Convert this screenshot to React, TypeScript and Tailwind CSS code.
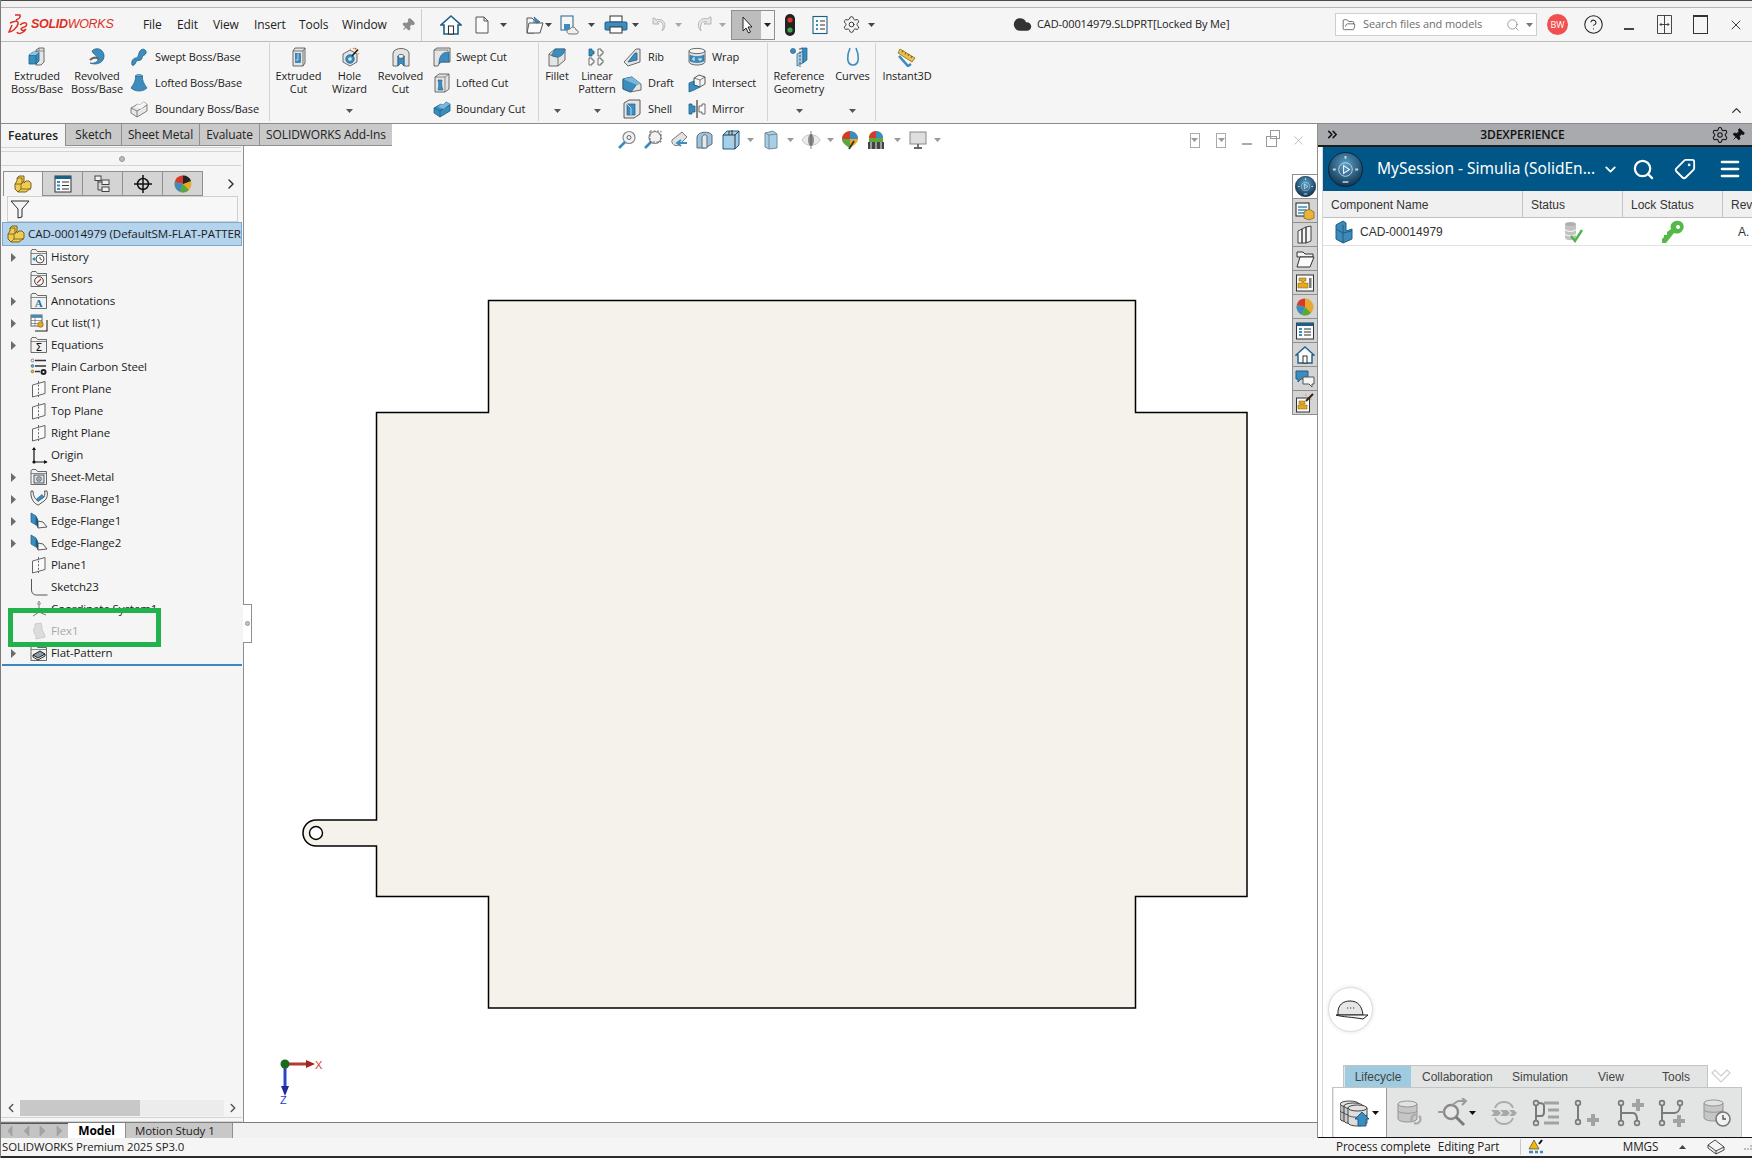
import React from "react";
import { Search, Tag, Menu, ChevronDown, ChevronRight, ChevronLeft, ChevronUp, Settings, Pin, Cloud, X, HelpCircle, ChevronsRight, FolderOpen } from "lucide-react";

const BL = "#3c8dbd", BD = "#1c5f88", OL = "#4a4a4a", LG = "#e4e4e4";

type P = { s?: number; c?: React.ReactNode; w?: number; h?: number; vb?: string };
const V = ({ s = 20, c, w, h, vb = "0 0 20 20" }: P) => (
  <svg width={w ?? s} height={h ?? s} viewBox={vb} className="shrink-0 block">{c}</svg>
);

const Caret = ({ up = false, c = "#555" }: { up?: boolean; c?: string }) => (
  <svg width="7" height="4" viewBox="0 0 7 4" className="shrink-0 block">
    <path d={up ? "M0 4 L3.5 0 L7 4Z" : "M0 0 H7 L3.5 4Z"} fill={c} />
  </svg>
);

/* ribbon icons */
const ExtrudedBoss = () => <V c={<>
  <path d="M9 3 L12 1 H17 V15 L14 18 H9Z" fill={LG} stroke={OL} strokeWidth=".8" />
  <path d="M12 1 V4 H9 M12 4 H17" fill="none" stroke={OL} strokeWidth=".6" />
  <path d="M2 8 L6 5 H12 V14 L9 17 H2Z" fill={BL} stroke={BD} strokeWidth=".8" />
  <path d="M2 8 H9 V17 M9 8 L12 5" fill="none" stroke={BD} strokeWidth=".8" />
  <path d="M2 8 L6 5 H12 L9 8Z" fill="#8cc4e4" />
</>} />;
const RevolvedBoss = () => <V c={<>
  <path d="M5 4 C8 0 16 1 17 8 C18 15 10 19 3 16 C8 17 12 14 11 11 C9 8 6 7 5 4Z" fill={BL} stroke={BD} strokeWidth=".7" />
  <path d="M3 13 C6 10 9 10 12 12" fill="none" stroke="#666" strokeWidth="2" />
</>} />;
const Swept = () => <V c={<path d="M3 18 C2 13 5 11 7 11 C10 11 9 5 12 3 C14 1 18 3 17 6 C16 9 13 8 13 11 C12 15 8 12 7 15 C6 18 4 19 3 18Z" fill={BL} stroke={BD} strokeWidth=".8" />} />;
const Lofted = () => <V c={<>
  <ellipse cx="10" cy="3" rx="3.5" ry="1.5" fill="#c4dcec" stroke={BD} strokeWidth=".7" />
  <path d="M6.5 3 C7 8 4 12 2 15 C6 19 14 19 18 15 C16 12 13 8 13.5 3Z" fill={BL} stroke={BD} strokeWidth=".7" />
</>} />;
const Boundary = ({ blue = false }: { blue?: boolean }) => <V c={<>
  <path d="M2 9 L9 5 C11 7 12 5 14 3 L18 5 V12 L8 18 L2 14Z" fill={blue ? BL : "#e8e8e8"} stroke={blue ? BD : "#666"} strokeWidth=".8" />
  <path d="M2 9 L8 12 L18 6 M8 12 V18" fill="none" stroke={blue ? BD : "#666"} strokeWidth=".8" />
  <path d="M9 5 C11 7 12 5 14 3 L18 5 C15 7 13 9 12 10 L6 8Z" fill={blue ? "#7ab7da" : "#f6f6f6"} />
</>} />;
const ExtrudedCut = () => <V c={<>
  <path d="M4 4 L6 1 H16 V16 L14 19 H4Z" fill={LG} stroke={OL} strokeWidth=".8" />
  <path d="M4 4 H14 V19 M14 4 L16 1" fill="none" stroke={OL} strokeWidth=".7" />
  <rect x="6.5" y="6.5" width="5" height="9" fill={BL} stroke={BD} strokeWidth=".6" />
  <path d="M6.5 13 H9 V6.5" fill="none" stroke="#d5eaf7" strokeWidth=".8" />
</>} />;
const Hole = () => <V c={<>
  <path d="M3 7 L10 3 L17 7 V15 L10 19 L3 15Z" fill={LG} stroke={OL} strokeWidth=".8" />
  <circle cx="10" cy="12" r="4.2" fill={BL} stroke={BD} strokeWidth=".8" />
  <circle cx="10" cy="12" r="1.8" fill="#d6ebf7" />
  <path d="M12 9 L18 2.5" stroke="#222" strokeWidth="1.8" />
  <path d="M13 1 l1 1 M18 6 l1 1 M10 2 h1" stroke="#e0a020" strokeWidth="1.2" />
  <circle cx="15.5" cy="1.6" r=".9" fill="#d03a2a" />
</>} />;
const RevolvedCut = () => <V c={<>
  <path d="M2 6 C3 0 17 0 18 6 V19 H13 V9 C13 7 7 7 7 9 V19 H2Z" fill={LG} stroke={OL} strokeWidth=".8" />
  <path d="M7 9 C8 12 12 12 13 9 V19 L10 16 L7 19Z" fill={BL} stroke={BD} strokeWidth=".7" />
</>} />;
const SweptCut = () => <V c={<>
  <path d="M2 3 L5 1 H18 V15 H8 L6 19 H2Z" fill={LG} stroke={OL} strokeWidth=".8" />
  <path d="M2 3 H16 V4" fill="none" stroke={OL} strokeWidth=".6" />
  <path d="M7 17 C7 9 10 5 17 5 V15 H11 C10 15 9 15 7 17Z" fill={BL} stroke={BD} strokeWidth=".7" />
</>} />;
const LoftedCut = () => <V c={<>
  <path d="M3 4 L7 1 H17 V16 L13 19 H3Z" fill={LG} stroke={OL} strokeWidth=".8" />
  <path d="M3 4 H13 V19 M13 4 L17 1" fill="none" stroke={OL} strokeWidth=".6" />
  <path d="M6 7 H10 C9 11 10 14 11 17 H6 C7 13 7 10 6 7Z" fill={BL} stroke={BD} strokeWidth=".6" />
</>} />;
const Fillet = () => <V c={<>
  <path d="M2 7 L8 2 H18 V13 L11 19 H2Z" fill={LG} stroke={OL} strokeWidth=".8" />
  <path d="M11 19 V10 M2 7 C4 9 8 10 11 10" fill="none" stroke={OL} strokeWidth=".7" />
  <path d="M8 2 H18 C18 6 14 10 11 10 C9 10 6 9 4.5 8 Z" fill={BL} stroke={BD} strokeWidth=".6" />
</>} />;
const Pattern = () => <V c={<>
  {[[2, 2, 1], [11, 2, 0], [2, 11, 0], [11, 11, 0]].map(([x, y, b], i) => (
    <path key={i} d={`M${x} ${y} h3 v2 h2 v3 h-2 v2 h-3Z`} fill={b ? BL : "#f8f8f8"} stroke={b ? BD : OL} strokeWidth=".8" />
  ))}
</>} />;
const Rib = () => <V c={<>
  <path d="M2 15 L14 2 L18 2 V15 L6 19Z" fill={LG} stroke={OL} strokeWidth=".8" />
  <path d="M6 15 L13 6 L15 6 V13Z" fill={BL} stroke={BD} strokeWidth=".8" />
</>} />;
const Draft = () => <V c={<>
  <path d="M1 6 L10 4 L19 11 V17 L8 19 L1 16Z" fill={LG} stroke={OL} strokeWidth=".8" />
  <path d="M1 6 L10 4 L15 11 L9 19 L1 16Z" fill={BL} stroke={BD} strokeWidth=".8" />
  <path d="M1 6 L10 4 L19 11 L15 12Z" fill="#7ab7da" />
</>} />;
const Shell = () => <V c={<>
  <path d="M2 4 L7 1 H18 V15 L12 19 H2Z" fill={LG} stroke={OL} strokeWidth=".9" />
  <path d="M5 5 H13 V16 H5Z" fill={BL} stroke={BD} strokeWidth=".7" />
  <path d="M5 5 L9 9 V16" fill="none" stroke="#d5eaf7" strokeWidth=".8" />
</>} />;
const Wrap = () => <V c={<>
  <path d="M2 4 V15 C3 19 17 19 18 15 V4" fill={LG} stroke={OL} strokeWidth=".8" />
  <ellipse cx="10" cy="4" rx="8" ry="2.6" fill="#f6f6f6" stroke={OL} strokeWidth=".8" />
  <path d="M3 8 C7 10 13 10 17 8 V14 C13 16 7 16 3 14Z" fill={BL} stroke={BD} strokeWidth=".5" />
  <path d="M8 11 h-2 v2 h2 M12 11 v2 h2 v-2" stroke="#fff" strokeWidth=".9" fill="none" />
</>} />;
const Intersect = () => <V c={<>
  <path d="M7 5 L12 2 L18 4 V11 L13 14 L7 12Z" fill="#f4f4f4" stroke={OL} strokeWidth=".9" />
  <path d="M7 5 L13 7 V14 M13 7 L18 4" fill="none" stroke={OL} strokeWidth=".7" />
  <path d="M2 10 L7 8 V12 L13 14 L7 17 L2 19Z" fill={BL} stroke={BD} strokeWidth=".8" />
</>} />;
const Mirror = () => <V c={<>
  <path d="M2 5 H5 V7 H8 V13 H5 V15 H2Z" fill={BL} stroke={BD} strokeWidth=".8" />
  <path d="M18 5 H15 V7 H12 V13 H15 V15 H18Z" fill="#fbfbfb" stroke={OL} strokeWidth=".8" />
  <path d="M10 1 V19" stroke="#111" strokeWidth="1" />
</>} />;
const RefGeo = () => <V c={<>
  <circle cx="4" cy="4" r="2.5" fill={BL} stroke={BD} strokeWidth=".7" />
  <path d="M8 7 L14 4 V16 L8 19Z" fill="#a6cde5" stroke={BD} strokeWidth=".7" />
  <path d="M12 1 L18 1 V13 L14 16 V4Z" fill={BL} stroke={BD} strokeWidth=".7" />
  <path d="M11 1 V20" stroke="#222" strokeWidth=".8" strokeDasharray="2 1.5" />
</>} />;
const Curves = () => <V c={<path d="M7 1 C4 8 3 18 10 18 C17 18 16 8 13 1" fill="none" stroke={BL} strokeWidth="1.6" />} />;
const Instant = () => <V c={<>
  <path d="M3 2 L18 11 L15 15 L1 6Z" fill="#e8c04a" stroke="#7a5c10" strokeWidth=".7" />
  <path d="M6 3.5 l-1 2 M9 5.5 l-1 2 M12 7 l-1 2 M15 9 l-1 2" stroke="#5a4408" strokeWidth=".8" />
  <path d="M2 9 L11 19 L14 17" fill="none" stroke={BL} strokeWidth="2.6" />
</>} />;

/* tree icons */
const Folder = ({ c }: { c?: React.ReactNode }) => <V s={18} vb="0 0 18 18" c={<>
  <path d="M1 3 L2 1.5 H6 L7.5 3.5 H16.5 V16.5 H1Z" fill="#f2f2f2" stroke="#5a5a5a" strokeWidth=".9" />
  <path d="M1 5.5 H16.5" stroke="#5a5a5a" strokeWidth=".7" />
  {c}
</>} />;
const PlaneI = () => <V s={18} vb="0 0 18 18" c={<>
  <path d="M2.5 5 L15 1.5 V13.5 L2.5 17Z" fill="#fafafa" stroke="#555" strokeWidth=".9" />
  <path d="M8.5 1 V17" stroke="#555" strokeWidth=".9" strokeDasharray="2 1.6" />
</>} />;

const treeIcons: Record<string, React.ReactNode> = {
  history: <Folder c={<><circle cx="10" cy="11" r="4" fill="#fff" stroke="#222" strokeWidth=".8" /><path d="M10 9 V11 L12 12" stroke="#222" strokeWidth=".8" fill="none" /><path d="M3 11 H6.5 M5 9.5 L3 11 L5 12.5" stroke={BL} strokeWidth="1.2" fill="none" /></>} />,
  sensors: <Folder c={<><circle cx="9" cy="11" r="4.3" fill="#fff" stroke="#222" strokeWidth=".9" /><path d="M7 13 L11 9" stroke="#d0342c" strokeWidth="1.2" /></>} />,
  ann: <Folder c={<text x="8.7" y="15" textAnchor="middle" fontFamily="Liberation Serif" fontWeight="700" fontSize="11" fill="#2b6ea3">A</text>} />,
  cut: <V s={18} vb="0 0 18 18" c={<>
    <rect x="1" y="1" width="11" height="11" fill="#fff" stroke="#555" strokeWidth=".9" />
    <path d="M1 3.5 H12 M1 6.5 H12 M1 9.5 H12 M5 3.5 V12" stroke="#555" strokeWidth=".6" />
    <rect x="1" y="1" width="11" height="2.5" fill={BL} />
    <path d="M5 17 H17 V6" fill="none" stroke="#222" strokeWidth="1.1" />
    <circle cx="10.5" cy="10.5" r="2.8" fill="#e6a61f" stroke="#7a5c10" strokeWidth=".6" />
  </>} />,
  eq: <Folder c={<text x="8.7" y="15" textAnchor="middle" fontFamily="DejaVu Sans" fontSize="10.5" fill="#111">Σ</text>} />,
  mat: <V s={18} vb="0 0 18 18" c={<>
    <path d="M5 2.5 H16 M5 8 H16 M5 13.5 H10" stroke="#333" strokeWidth="1.3" />
    <circle cx="2.5" cy="2.5" r="1.4" fill="#fff" stroke="#555" strokeWidth=".7" />
    <circle cx="2.5" cy="8" r="1.4" fill="#6aa9d2" stroke={BD} strokeWidth=".6" />
    <circle cx="2.5" cy="13.5" r="1.4" fill="#e9b43a" stroke="#7a5c10" strokeWidth=".6" />
    <circle cx="13.5" cy="14" r="3" fill="#222" /><circle cx="13.5" cy="14" r="1" fill="#f5f5f5" />
  </>} />,
  plane: <PlaneI />,
  origin: <V s={18} vb="0 0 18 18" c={<>
    <path d="M4 16 V2 M4 16 H17" stroke="#111" strokeWidth="1.2" />
    <path d="M2 4 L4 1 L6 4Z M14 14 L17.5 16 L14 18Z" fill="#111" />
    <circle cx="4" cy="16" r="1.6" fill="#111" />
  </>} />,
  sm: <Folder c={<><rect x="4" y="7" width="10" height="8" fill="#cfe2f0" stroke="#222" strokeWidth=".7" /><circle cx="9" cy="11" r="2.2" fill="#fff" stroke="#222" strokeWidth=".8" /><circle cx="9" cy="11" r=".8" fill="#222" /></>} />,
  base: <V s={18} vb="0 0 18 18" c={<>
    <path d="M1 1 L3 1 C3 6 5 9 8 11 L14 7 C15 5 15 3 14.5 1 H17 C18 5 17 9 14 11 L8.5 15 C4 14 0 8 1 1Z" fill="#f4f4f4" stroke="#444" strokeWidth=".9" />
    <path d="M6.5 9 L12 4.5 L14 7 L8 11.5Z" fill={BL} stroke={BD} strokeWidth=".6" />
  </>} />,
  edge: <V s={18} vb="0 0 18 18" c={<>
    <path d="M1 1 L6 4 V13 L1 10Z" fill={BL} stroke={BD} strokeWidth=".7" />
    <path d="M6 4 L8 7 V16 L6 13Z" fill={BD} />
    <path d="M8 16 L17 15 L13 10 L8 9Z" fill="#f6f6f6" stroke="#333" strokeWidth=".8" />
  </>} />,
  sketch: <V s={18} vb="0 0 18 18" c={<path d="M1.5 1 V12 C1.5 15 3.5 17 6.5 17 H17.5" fill="none" stroke="#444" strokeWidth=".9" />} />,
  coord: <V s={18} vb="0 0 18 18" c={<>
    <path d="M9 12 V2 M9 12 L3 16 M9 12 L16 15" stroke="#555" strokeWidth=".8" />
    <path d="M7.5 4 L9 1 L10.5 4Z" fill="#fff" stroke="#555" strokeWidth=".6" />
  </>} />,
  flex: <V s={18} vb="0 0 18 18" c={<path d="M5 2 L11 1 L12 5 C11 8 15 11 15 15 L6 17 C7 13 3 11 3.5 7 C5 6 5.5 4 5 2Z" fill="#dcdcdc" stroke="#c4c4c4" strokeWidth=".8" />} />,
  flat: <Folder c={<><path d="M3 11 L10 7 L15 10 L8 14Z" fill="#8a9aa6" stroke="#111" strokeWidth=".9" /><path d="M3 11 V13 L8 16 L15 12 V10" fill="none" stroke="#111" strokeWidth=".9" /></>} />,
};

const Part = ({ s = 18 }: { s?: number }) => <V s={s} vb="0 0 18 18" c={<>
  <path d="M1 9 L3 6 V3 L5 1 H10 V8 L12 6 H15 L17 8 V13 L12 17 H4 L1 14Z" fill="#eecb52" stroke="#6d5510" strokeWidth=".9" />
  <path d="M1 9 H7 L10 6 M7 9 V14 L4 17 M7 14 H17 M3 3 H8 V9" fill="none" stroke="#6d5510" strokeWidth=".8" />
</>} />;

const Compass = ({ s, id }: { s: number; id: string }) => (
  <svg width={s} height={s} viewBox="0 0 36 36" className="shrink-0 block">
    <defs><radialGradient id={id} cx="50%" cy="35%" r="70%"><stop offset="0" stopColor="#5a9fc6" /><stop offset="1" stopColor="#0b2c47" /></radialGradient></defs>
    <circle cx="18" cy="18" r="17.5" fill={`url(#${id})`} stroke="#0a2438" />
    <circle cx="18" cy="18" r="7" fill="none" stroke="#d9ecf7" strokeWidth=".8" />
    <path d="M16 14 L22 18 L16 22Z" fill="none" stroke="#e8f4fb" strokeWidth="1.2" />
    <path d="M5 17 h3 v2 h-3Z M28 17 h3 v2 h-3Z M15 30 h6 v1.5 h-6Z M17 4 h2 v3 h-2Z" fill="#bcd9ea" />
  </svg>
);

const Big = ({ icon, l1, l2, w, dd = false }: { icon: React.ReactNode; l1: string; l2?: string; w: string; dd?: boolean }) => (
  <div className={`flex flex-col items-center h-[78px] pt-[4px] shrink-0 ${w}`}>
    <div className="h-[20px]">{icon}</div>
    <div className="mt-[2px] text-center leading-[13px] whitespace-nowrap">{l1}{l2 && <><br />{l2}</>}</div>
    {dd && <div className="mt-auto mb-[8px]"><Caret /></div>}
  </div>
);
const SmallCol = ({ w, items, gap }: { w: string; gap: string; items: [React.ReactNode, string][] }) => (
  <div className={`flex flex-col shrink-0 mt-[1px] ${w}`}>
    {items.map(([ic, t]) => (
      <div key={t} className={`flex items-center h-[26px] whitespace-nowrap ${gap}`}>{ic}<span>{t}</span></div>
    ))}
  </div>
);
const Sep = () => <div className="w-px h-[78px] bg-[#d4d4d4] shrink-0" />;

const tree: [string, string, boolean, string?][] = [
  ["History", "history", true], ["Sensors", "sensors", false], ["Annotations", "ann", true], ["Cut list(1)", "cut", true],
  ["Equations", "eq", true], ["Plain Carbon Steel", "mat", false], ["Front Plane", "plane", false], ["Top Plane", "plane", false],
  ["Right Plane", "plane", false], ["Origin", "origin", false], ["Sheet-Metal", "sm", true], ["Base-Flange1", "base", true],
  ["Edge-Flange1", "edge", true], ["Edge-Flange2", "edge", true], ["Plane1", "plane", false], ["Sketch23", "sketch", false],
  ["Coordinate System1", "coord", false], ["Flex1", "flex", false, "text-[#a8a8a8]"], ["Flat-Pattern", "flat", true],
];

const Gy = ({ c, w = 30, h = 30 }: { c: React.ReactNode; w?: number; h?: number }) => (
  <svg width={w} height={h} viewBox="0 0 30 30" className="shrink-0 block">{c}</svg>
);
const Db = ({ x = 3, y = 3, f = "#c6c6c6", k = "#8c8c8c" }: { x?: number; y?: number; f?: string; k?: string }) => (
  <g transform={`translate(${x} ${y})`}>
    <path d="M0 3 V18 C1 22 18 22 19 18 V3Z" fill={f} stroke={k} strokeWidth=".9" />
    <ellipse cx="9.5" cy="3" rx="9.5" ry="3" fill="#e2e2e2" stroke={k} strokeWidth=".9" />
    <path d="M0 10 C1 13 18 13 19 10" fill="none" stroke={k} strokeWidth=".8" />
  </g>
);
const Node = ({ x, y }: { x: number; y: number }) => <circle cx={x} cy={y} r="2.4" fill="#dedede" stroke="#7a7a7a" strokeWidth="1.6" />;
const Plus = ({ x, y }: { x: number; y: number }) => <path transform={`translate(${x} ${y})`} d="M4 0 h4 v4 h4 v4 h-4 v4 h-4 v-4 h-4 v-4 h4Z" fill="#a2a2a2" />;

const App = () => (
  <div className="w-[1752px] h-[1158px] overflow-hidden flex flex-col bg-[#f5f5f5] border-l border-[#7c7c7c] text-[#1c1c1c] text-[11px] font-['Open_Sans','Noto_Sans',sans-serif] tracking-[-0.1px]">
    {/* window strip */}
    <div className="h-[1px] bg-[#4a4a4a] shrink-0" />
    <div className="h-[7px] bg-[#f1f1f1] border-b border-[#b4b4b4] shrink-0" />

    {/* title bar */}
    <div className="h-[34px] border-b border-[#bcbcbc] flex items-center shrink-0 relative">
      <div className="flex items-center w-[142px] pl-[6px] gap-[2px]">
        <V w={22} h={22} vb="0 0 22 22" c={<path d="M8 1 L13 1 C14 3 12 5 9 6 M3 9 C7 7 12 6 11 10 C10 14 5 18 2 18 L5 11 M13 11 C18 7 21 9 19 12 C17 14 14 13 14 15 C15 18 18 16 19 15 C17 19 11 21 10 18" fill="none" stroke="#dc2f25" strokeWidth="1.5" />} />
        <span className="italic text-[#dc2f25] text-[12.5px] font-['Liberation_Sans',sans-serif] tracking-[-0.3px]"><b>SOLID</b>WORKS</span>
      </div>
      <div className="flex items-center text-[12px] text-[#222] w-[278px]">
        <span className="w-[34px]">File</span><span className="w-[36px]">Edit</span><span className="w-[41px]">View</span>
        <span className="w-[45px]">Insert</span><span className="w-[43px]">Tools</span><span className="w-[59px]">Window</span>
        <Pin size={14} className="text-[#8c8c8c] rotate-45" fill="#8c8c8c" />
      </div>
      <div className="w-px h-[32px] bg-[#cfcfcf]" />
      <div className="flex items-center ml-[18px]">
        <V s={22} vb="0 0 22 22" c={<>
          <path d="M11 2 L21 11 H18 V20 H4 V11 H1Z" fill="#fff" stroke={BD} strokeWidth="1.6" />
          <rect x="8.5" y="12" width="5" height="8" fill="#fff" stroke="#333" strokeWidth="1.1" />
        </>} />
        <div className="ml-[11px]"><V s={18} vb="0 0 18 18" c={<path d="M3 1 H11 L15 5 V17 H3Z M11 1 V5 H15" fill="#fafafa" stroke="#555" strokeWidth="1" />} /></div>
        <div className="ml-[9px]"><Caret c="#444" /></div>
        <div className="ml-[18px]"><V s={20} c={<>
          <path d="M2 3 H7 L9 5 V18 H2Z" fill="#f6f6f6" stroke="#555" />
          <path d="M4 8 H18 L15 18 H2Z" fill="#fafafa" stroke="#555" />
          <path d="M9 2 L15 7 L11 8 Z" fill={BL} stroke={BD} strokeWidth=".7" />
        </>} /></div>
        <Caret c="#444" />
        <div className="ml-[7px]"><V s={20} c={<>
          <rect x="2" y="1" width="12" height="14" fill="#f6f6f6" stroke="#3b6d90" strokeWidth="1.1" />
          <rect x="5" y="9" width="6" height="6" fill={BL} />
          <path d="M11 19 C7 19 7 14 11 14 C12 11 17 12 17 15 C20 15 20 19 17 19Z" fill="#eee" stroke="#666" strokeWidth=".9" />
        </>} /></div>
        <div className="ml-[9px]"><Caret c="#444" /></div>
        <div className="ml-[9px]"><V w={24} h={20} vb="0 0 24 20" c={<>
          <rect x="6" y="1" width="12" height="6" fill="#fff" stroke="#333" />
          <rect x="1" y="7" width="22" height="8" rx="1" fill={BL} stroke={BD} />
          <rect x="6" y="12" width="12" height="6" fill="#fff" stroke="#333" />
        </>} /></div>
        <div className="ml-[4px]"><Caret c="#444" /></div>
        <div className="ml-[11px]"><V s={18} vb="0 0 18 18" c={<path d="M3 2 V8 H9 L7 6 C11 4 15 8 12 15 C18 10 14 1 6 4 L4.5 2Z" fill="#e6e6e6" stroke="#b0b0b0" strokeWidth=".9" />} /></div>
        <div className="ml-[7px]"><Caret c="#a8a8a8" /></div>
        <div className="ml-[13px]"><V s={20} c={<path d="M16 2 V9 H9 L11.5 7 C8 5 4 9 6 16 C0 10 5 1 13 4 L14.5 2Z" fill="#e6e6e6" stroke="#b0b0b0" strokeWidth=".9" />} /></div>
        <div className="ml-[4px]"><Caret c="#a8a8a8" /></div>
        <div className="ml-[5px] flex items-center h-[30px] border border-[#8f8f8f]">
          <div className="w-[29px] h-full bg-[#bdbdbd] flex items-center justify-center">
            <V s={20} c={<path d="M6 2 V16 L9 13 L11.5 18 L13.5 17 L11 12 H15Z" fill="#fff" stroke="#222" strokeWidth="1" />} />
          </div>
          <div className="w-[13px] flex justify-center"><Caret c="#222" /></div>
        </div>
        <div className="ml-[9px]"><V w={12} h={24} vb="0 0 12 24" c={<>
          <rect x="1" y="1" width="10" height="22" rx="5" fill="#222" />
          <circle cx="6" cy="7" r="2.6" fill="#d8372d" /><circle cx="6" cy="17" r="2.6" fill="#3da84a" />
        </>} /></div>
        <div className="ml-[14px]"><V s={20} c={<>
          <rect x="3" y="1.5" width="14" height="17" fill="#fafafa" stroke={BD} strokeWidth="1.1" />
          <path d="M6 6 H8 M6 10 H8 M6 14 H8" stroke={BL} strokeWidth="2" />
          <path d="M10 6 H15 M10 10 H15 M10 14 H15" stroke="#333" strokeWidth="1.2" />
        </>} /></div>
        <div className="ml-[12px]"><Settings size={19} strokeWidth={1.2} className="text-[#333]" /></div>
        <div className="ml-[7px]"><Caret c="#444" /></div>
      </div>
      <div className="ml-[138px] flex items-center gap-[5px] text-[11px] text-[#222] whitespace-nowrap">
        <Cloud size={19} fill="#333" className="text-[#333]" />
        <span>CAD-00014979.SLDPRT[Locked By Me]</span>
      </div>
      <div className="ml-auto flex items-center">
        <div className="w-[202px] h-[23px] bg-white border border-[#cfcfcf] flex items-center pl-[6px] text-[#6e6e6e] text-[11px] whitespace-nowrap">
          <FolderOpen size={14} strokeWidth={1.3} className="text-[#444]" />
          <span className="ml-[7px]">Search files and models</span>
          <Search size={14} strokeWidth={1.2} className="ml-auto text-[#777]" />
          <div className="ml-[6px] mr-[3px]"><Caret c="#777" /></div>
        </div>
        <div className="ml-[10px] w-[21px] h-[21px] rounded-full bg-[#f05050] text-white text-[9px] flex items-center justify-center">BW</div>
        <HelpCircle size={21} strokeWidth={1.2} className="ml-[15px] text-[#222]" />
        <div className="ml-[20px] w-[10px] h-[2px] bg-[#444] mt-[9px]" />
        <div className="ml-[23px]"><V w={15} h={19} vb="0 0 15 19" c={<path d="M.5 .5 H14.5 V18.5 H.5Z M7.5 .5 V18.5 M3 9.5 H12 M4.5 8 L3 9.5 L4.5 11 M10.5 8 L12 9.5 L10.5 11" fill="none" stroke="#333" strokeWidth=".9" />} /></div>
        <div className="ml-[21px] w-[15px] h-[19px] border border-[#333] border-t-[2px]" />
        <X size={16} strokeWidth={1.3} className="ml-[20px] mr-[8px] text-[#222]" />
      </div>
    </div>

    {/* ribbon */}
    <div className="h-[82px] border-b border-[#8a8a8a] flex items-start pt-[1px] shrink-0 relative">
      <div className="w-[6px]" />
      <Big icon={<ExtrudedBoss />} l1="Extruded" l2="Boss/Base" w="w-[60px]" />
      <Big icon={<RevolvedBoss />} l1="Revolved" l2="Boss/Base" w="w-[60px]" />
      <SmallCol w="w-[140px] ml-[2px]" gap="gap-[6px]" items={[[<Swept />, "Swept Boss/Base"], [<Lofted />, "Lofted Boss/Base"], [<Boundary />, "Boundary Boss/Base"]]} />
      <Sep />
      <div className="w-[3px]" />
      <Big icon={<ExtrudedCut />} l1="Extruded" l2="Cut" w="w-[51px]" />
      <Big icon={<Hole />} l1="Hole" l2="Wizard" w="w-[51px]" dd />
      <Big icon={<RevolvedCut />} l1="Revolved" l2="Cut" w="w-[51px]" />
      <SmallCol w="w-[106px] ml-[6px]" gap="gap-[4px]" items={[[<SweptCut />, "Swept Cut"], [<LoftedCut />, "Lofted Cut"], [<Boundary blue />, "Boundary Cut"]]} />
      <Sep />
      <Big icon={<Fillet />} l1="Fillet" w="w-[36px]" dd />
      <Big icon={<Pattern />} l1="Linear" l2="Pattern" w="w-[44px]" dd />
      <SmallCol w="w-[65px] ml-[3px]" gap="gap-[6px]" items={[[<Rib />, "Rib"], [<Draft />, "Draft"], [<Shell />, "Shell"]]} />
      <SmallCol w="w-[80px]" gap="gap-[5px]" items={[[<Wrap />, "Wrap"], [<Intersect />, "Intersect"], [<Mirror />, "Mirror"]]} />
      <Sep />
      <Big icon={<RefGeo />} l1="Reference" l2="Geometry" w="w-[62px]" dd />
      <Big icon={<Curves />} l1="Curves" w="w-[45px]" dd />
      <Sep />
      <Big icon={<Instant />} l1="Instant3D" w="w-[62px]" />
      <ChevronUp size={15} strokeWidth={2.2} className="ml-auto mr-[8px] mt-[60px] text-[#333]" />
    </div>

    {/* main */}
    <div className="flex-1 flex min-h-0">
      {/* left + canvas */}
      <div className="w-[1317px] flex flex-col shrink-0 border-r border-[#8f8f8f]">
        <div className="h-[22px] bg-white flex items-stretch shrink-0 text-[#222] relative z-10">
          <div className="w-[64px] bg-[#f5f5f5] flex items-center justify-center font-semibold text-[12px] pt-px">Features</div>
          {[["Sketch", "w-[56px]"], ["Sheet Metal", "w-[78px]"], ["Evaluate", "w-[60px]"], ["SOLIDWORKS Add-Ins", "w-[133px]"]].map(([t, w]) => (
            <div key={t} className={`${w} bg-[#c9c9c9] border-l border-b border-r-0 border-[#8f8f8f] flex items-center justify-center text-[12px] whitespace-nowrap last:border-r pt-px`}>{t}</div>
          ))}
          <div className="flex items-center ml-[222px] pt-[10px]">
            <HudIcons />
          </div>
          <div className="ml-auto flex items-center pr-[6px] pt-[10px] text-[#a8a8a8]">
            <div className="w-[26px] flex justify-center"><div className="w-[10px] h-[15px] border border-[#aaa] flex items-center"><Caret c="#999" /></div></div>
            <div className="w-[26px] flex justify-center"><div className="w-[10px] h-[15px] border border-[#aaa] flex items-center justify-end"><Caret c="#999" /></div></div>
            <div className="w-[26px] flex justify-center"><div className="w-[10px] h-[2px] bg-[#aaa] mt-[8px]" /></div>
            <div className="w-[26px] flex justify-center relative"><div className="w-[11px] h-[11px] border border-[#999] mt-[3px] ml-[-3px]" /><div className="w-[10px] h-[9px] border border-[#999] absolute top-[-3px] left-[10px]" /></div>
            <X size={15} strokeWidth={1.2} className="mx-[5px] text-[#aaa]" />
          </div>
        </div>
        <div className="flex-1 flex min-h-0">
          {/* feature manager */}
          <div className="w-[243px] shrink-0 border-r border-[#8f8f8f] flex flex-col relative bg-[#f5f5f5] z-10">
            <div className="h-[5px] mt-[1px] border-y border-[#d4d4d4] mr-[2px]" />
            <div className="h-[13px] flex items-center justify-center"><div className="w-[6px] h-[6px] rounded-full bg-[#bbb] border border-[#999]" /></div>
            <div className="border-t border-[#d4d4d4] mr-[2px] h-[6px]" />
            <div className="h-[25px] flex items-stretch pl-[2px] shrink-0">
              {[
                <Part s={18} />,
                <V s={18} vb="0 0 18 18" c={<><rect x="1" y="1" width="16" height="16" fill="#fafafa" stroke="#333" /><rect x="1" y="1" width="16" height="3" fill={BD} /><path d="M3 7 H6 M3 10.5 H6 M3 14 H6" stroke={BL} strokeWidth="2" /><path d="M8 7 H15 M8 10.5 H15 M8 14 H15" stroke="#333" /></>} />,
                <V s={18} vb="0 0 18 18" c={<><rect x="1" y="1" width="6" height="4.5" fill="#eee" stroke="#444" /><rect x="8" y="5" width="7" height="4.5" fill="#eee" stroke="#444" /><rect x="8" y="12" width="7" height="4.5" fill="#eee" stroke="#444" /><path d="M4 6 V15 H8 M4 7 H8" fill="none" stroke="#444" /></>} />,
                <V s={18} vb="0 0 18 18" c={<><circle cx="9" cy="9" r="5.5" fill="none" stroke="#111" strokeWidth="1.5" /><path d="M9 0 V18 M0 9 H18" stroke="#111" strokeWidth="1.5" /></>} />,
                <V s={18} vb="0 0 18 18" c={<><circle cx="9" cy="9" r="8.5" fill="#e8a830" /><path d="M9 9 L9 .5 A8.5 8.5 0 0 0 .8 7Z" fill="#d33a2c" /><path d="M9 9 L.8 7 A8.5 8.5 0 0 0 6 17Z" fill={BL} /><path d="M9 9 L6 17 A8.5 8.5 0 0 0 15 15Z" fill="#5aa83c" /><path d="M9 9 L9 .5 A8.5 8.5 0 0 1 17 6Z" fill="#222" /></>} />,
              ].map((ic, i) => (
                <div key={i} className={`w-[40px] flex items-center justify-center border border-[#8f8f8f] ${i === 0 ? "bg-[#f5f5f5] border-b-0" : "bg-[#d4d4d4] border-l-0"}`}>{ic}</div>
              ))}
              <ChevronRight size={16} strokeWidth={2.2} className="ml-[20px] self-center text-[#333]" />
            </div>
            <div className="h-[26px] ml-[6px] mr-[5px] border border-[#d0d0d0] bg-[#f7f7f7] flex items-center pl-[2px] shrink-0">
              <V s={20} c={<path d="M1 2 H19 L12 10 V18 L8 19 V10Z" fill="#f4f4f4" stroke="#2a2a2a" strokeWidth="1" />} />
            </div>
            <div className="h-[24px] ml-[1px] mr-[1px] bg-[#b4d3ec] border border-[#7ea9cf] flex items-center pl-[4px] gap-[3px] overflow-hidden whitespace-nowrap text-[11.6px] shrink-0">
              <Part s={18} /><span>CAD-00014979 (DefaultSM-FLAT-PATTERN)</span>
            </div>
            {tree.map(([t, ic, ex, cls]) => (
              <div key={t} className={`h-[22px] flex items-center shrink-0 whitespace-nowrap text-[11.5px] ${cls ?? ""}`}>
                <div className="w-[26px] pl-[10px] shrink-0">{ex && <svg width="5" height="9" viewBox="0 0 5 9" className="block"><path d="M0 0 L5 4.5 L0 9Z" fill="#6c6c6c" /></svg>}</div>
                <div className="w-[24px] flex justify-center shrink-0">{treeIcons[ic]}</div>
                <span>{t}</span>
              </div>
            ))}
            <div className="h-[2px] mx-[1px] bg-[#3a87c2] shrink-0" />
            <div className="flex-1" />
            <div className="h-[16px] flex items-center mx-[1px] shrink-0">
              <ChevronLeft size={14} strokeWidth={2.5} className="mx-[2px] text-[#555]" />
              <div className="w-[120px] h-full bg-[#c8c8c8]" />
              <div className="flex-1 h-full bg-[#ececec]" />
              <ChevronRight size={14} strokeWidth={2.5} className="mx-[2px] text-[#555]" />
            </div>
            <div className="h-[5px] border-y border-[#d4d4d4] mt-[1px] mr-[1px] shrink-0" />
            {/* splitter handle */}
            <div className="absolute left-[242px] top-[458px] w-[9px] h-[39px] bg-white border border-l-0 border-[#8f8f8f] flex items-center justify-center">
              <div className="w-[5px] h-[5px] rounded-full bg-[#c4c4c4] border border-[#999]" />
            </div>
            {/* green annotation */}
            <div className="absolute left-[7px] top-[462px] w-[153px] h-[39px] border-[5px] border-[#22b14c]" />
          </div>
          {/* canvas */}
          <div className="flex-1 relative bg-white overflow-hidden">
            <svg width="1073" height="977" viewBox="244 146 1073 977" className="absolute left-0 top-0">
              <path d="M488.5 300.5 H1135.5 V412.5 H1247 V896.5 H1135.5 V1008 H488.5 V896.5 H376.5 V846 H316 A13 13 0 0 1 316 820 H376.5 V412.5 H488.5Z" fill="#f5f1eb" stroke="#000" strokeWidth="1.5" />
              <circle cx="316" cy="833" r="6.5" fill="#fff" stroke="#000" strokeWidth="1.4" />
              <path d="M285 1064 H309" stroke="#b33a36" strokeWidth="3" />
              <path d="M306 1060 L315 1064 L306 1068Z" fill="#a02420" />
              <path d="M285 1064 V1088" stroke="#2a45c8" strokeWidth="3" />
              <path d="M281 1086 H289 L285 1096Z" fill="#1c2a9e" />
              <circle cx="285" cy="1064" r="4.5" fill="#1c6a1c" />
              <text x="315" y="1069" fontFamily="Liberation Sans" fontSize="11" fill="#d93a30">X</text>
              <text x="280" y="1104" fontFamily="Liberation Sans" fontSize="11" fill="#2a3fc8">Z</text>
            </svg>
            <div className="absolute right-0 top-[28px] w-[25px] flex flex-col border-l border-t border-[#8f8f8f]">
              {[
                <Compass s={21} id="cs2" />,
                <V s={20} c={<><rect x="1" y="2" width="13" height="13" fill="#fafafa" stroke="#222" /><path d="M3 6 H12 M3 9 H12 M3 12 H9" stroke={BL} strokeWidth="1.3" /><path d="M9 11 L14 8 L19 11 V17 L14 19 L9 17Z" fill="#e9b43a" stroke="#7a5c10" strokeWidth=".7" /></>} />,
                <V s={20} c={<path d="M3 6 L7 4 L7 18 L3 18Z M7 4 L11 2 V18 H7Z M11 2 L16 1 V16 L11 18Z" fill="#f4f4f4" stroke="#333" strokeWidth=".9" />} />,
                <V s={20} c={<><path d="M2 3 H8 L10 5 H18 V8 H2Z" fill="#f4f4f4" stroke="#333" /><path d="M5 8 H19 L15 18 H2Z" fill="#fafafa" stroke="#333" /></>} />,
                <V s={20} c={<><rect x="1.5" y="2" width="17" height="16" fill="#fafafa" stroke="#333" /><path d="M4 5 H11 V8 H9 V10 H13 V15 H3 V10 H7 V8 H4Z" fill="#e6a61f" stroke="#7a5c10" strokeWidth=".5" /><rect x="14" y="5" width="2.5" height="10" fill="#777" /></>} />,
                <V s={20} c={<><circle cx="10" cy="10" r="8.5" fill="#e8a830" /><path d="M10 10 L10 1.5 A8.5 8.5 0 0 0 1.8 8Z" fill="#d33a2c" /><path d="M10 10 L1.8 8 A8.5 8.5 0 0 0 7 18Z" fill={BL} /><path d="M10 10 L7 18 A8.5 8.5 0 0 0 16 16Z" fill="#5aa83c" /></>} />,
                <V s={20} c={<><rect x="1.5" y="2" width="17" height="16" fill="#fafafa" stroke="#333" /><rect x="1.5" y="2" width="17" height="3" fill={BD} /><path d="M4 8 H7 M4 11 H7 M4 14 H7" stroke={BL} strokeWidth="2" /><path d="M9 8 H16 M9 11 H16 M9 14 H16" stroke="#333" /></>} />,
                <V s={20} c={<><path d="M10 2 L19 10 H17 V18 H3 V10 H1Z" fill="#fafafa" stroke={BD} strokeWidth="1.4" /><rect x="8" y="11" width="4" height="7" fill="#fff" stroke="#333" /></>} />,
                <V s={20} c={<><path d="M1 2 H13 V10 H6 L3 13 V10 H1Z" fill={BL} stroke={BD} /><path d="M8 8 H19 V15 H17 V18 L14 15 H8Z" fill="#f4f4f4" stroke="#555" /></>} />,
                <V s={20} c={<><rect x="1.5" y="5" width="13" height="14" fill="#fafafa" stroke="#333" /><path d="M4 8 H10 V11 H8 V12 H12 V16 H3 V12 H6 V11 H4Z" fill="#e6a61f" stroke="#7a5c10" strokeWidth=".5" /><path d="M11 8 L18 1" stroke="#222" strokeWidth="2" /><path d="M10 2 h2 M15 6 h2" stroke="#e0a020" /></>} />,
              ].map((ic, i) => (
                <div key={i} className={`h-[24px] flex items-center justify-center border-b border-[#8f8f8f] ${i === 0 ? "bg-white" : "bg-[#d4d4d4]"}`}>{ic}</div>
              ))}
            </div>
          </div>
        </div>
        {/* model tabs */}
        <div className="h-[16px] flex shrink-0 bg-[#f1f1f1] border-t border-[#7e7e7e]">
          <div className="w-[67px] bg-[#c4c4c4] border-t border-[#555] flex items-center justify-around px-[2px]">
            {["M7 1 L3 6 L7 11Z", "M8 1 L3 6 L8 11Z", "M3 1 L8 6 L3 11Z", "M4 1 L9 6 L4 11Z"].map((d, i) => (
              <svg key={i} width="11" height="12" viewBox="0 0 11 12" className="block"><path d={d} fill="#a4a4a4" stroke="#9a9a9a" strokeWidth=".6" /></svg>
            ))}
          </div>
          <div className="w-[57px] bg-white flex items-center justify-center font-bold text-[12px] text-black leading-none">Model</div>
          <div className="w-[108px] bg-[#c8c8c8] border-x border-[#8f8f8f] flex items-center pl-[9px] text-[11.5px] leading-none whitespace-nowrap">Motion Study 1</div>
        </div>
      </div>

      {/* right panel */}
      <div className="flex-1 flex flex-col min-w-0 bg-white border-b border-[#111]">
        <div className="h-[23px] bg-[#a9aaae] border-b-2 border-[#1e1e1e] flex items-center shrink-0 text-[#111] relative">
          <ChevronsRight size={15} strokeWidth={2.4} className="ml-[7px]" />
          <span className="flex-1 text-center font-semibold text-[12px] pr-[6px]">3DEXPERIENCE</span>
          <Settings size={18} strokeWidth={1.4} className="mr-[2px]" />
          <Pin size={14} fill="#111" strokeWidth={1.4} className="mr-[7px] rotate-45" />
        </div>
        <div className="flex-1 flex flex-col ml-[4px] border-l border-[#d8d8d8] min-h-0">
          <div className="h-[44px] bg-[#005686] flex items-center text-white shrink-0 pl-[5px]">
            <Compass s={35} id="cs1" />
            <span className="ml-[14px] w-[221px] text-[15.5px] whitespace-nowrap font-['Noto_Sans',sans-serif] tracking-normal">MySession - Simulia (SolidEn...</span>
            <ChevronDown size={17} strokeWidth={2.6} className="ml-[4px]" />
            <Search size={23} strokeWidth={2.3} className="ml-[13px]" />
            <Tag size={22} strokeWidth={2} className="ml-[19px] -scale-x-100" />
            <Menu size={24} strokeWidth={2.6} className="ml-[22px]" />
          </div>
          <div className="h-[27px] bg-[#f0f0f0] border-b border-[#c0c0c0] flex items-center shrink-0 text-[12px] text-[#333] font-['Liberation_Sans',sans-serif] tracking-normal">
            {[["Component Name", "w-[200px]"], ["Status", "w-[100px]"], ["Lock Status", "w-[100px]"], ["Rev", "flex-1"]].map(([t, w]) => (
              <div key={t} className={`${w} h-full flex items-center pl-[8px] pt-px border-r border-[#c4c4c4] last:border-r-0 overflow-hidden`}>{t}</div>
            ))}
          </div>
          <div className="h-[28px] border-b border-[#e2e2e2] flex items-center shrink-0 text-[12px] text-[#333] font-['Liberation_Sans',sans-serif] tracking-normal">
            <div className="w-[200px] flex items-center pl-[11px] gap-[6px]">
              <V w={20} h={24} vb="0 0 20 24" c={<path d="M2 5 L9 1 L12 3 V11 L18 9 V19 L9 23 L2 19Z M9 5 V13 L2 9 M9 13 L18 11 M9 13 V23" fill="#3f88b8" stroke="#1c5f88" strokeWidth="1" />} />
              <span>CAD-00014979</span>
            </div>
            <div className="w-[100px] flex justify-center">
              <V s={22} vb="0 0 22 22" c={<>
                <path d="M3 3 V17 C4 20 13 20 14 17 V3Z" fill="#c2c2c2" />
                <ellipse cx="8.5" cy="3" rx="5.5" ry="2" fill="#b0b0b0" />
                <path d="M3 8.5 C5 11 12 11 14 8.5 M3 13 C5 15.5 12 15.5 14 13" stroke="#fff" fill="none" />
                <path d="M9 15 L13 20 L20 9" fill="none" stroke="#4db848" strokeWidth="2.4" />
              </>} />
            </div>
            <div className="w-[100px] flex justify-center">
              <V s={24} vb="0 0 24 24" c={<path d="M1 23 V19 L3 17 V15 H6 V12 L10 9 C8 3 14 0 18 1 C23 2 24 8 21 11 C19 14 15 14 13 13 L5 23Z M17 5 A2 2 0 1 0 17.1 5Z" fill="#55b948" fillRule="evenodd" />} />
            </div>
            <div className="flex-1 pl-[15px]">A.</div>
          </div>
          <div className="flex-1" />
          <div className="ml-[5px] w-[45px] h-[45px] rounded-full bg-white border border-[#dcdcdc] shadow-[0_0_4px_rgba(0,0,0,0.12)] flex items-center justify-center shrink-0">
            <V w={38} h={24} vb="0 0 38 24" c={<>
              <path d="M6 17 C5 6 12 3 18 3 C26 3 30 8 31 17Z" fill="#e6e6e6" stroke="#222" strokeWidth="1" />
              <path d="M4 17 H36 L31 21 C20 19 10 19 4 17Z" fill="#f6f6f6" stroke="#222" strokeWidth="1" />
              <path d="M15 10 h1.2 M18 10 h1.2 M21 10 h1.2" stroke="#333" strokeWidth="1.2" />
            </>} />
          </div>
          <div className="mt-[33px] ml-[20px] flex items-center shrink-0">
            <div className="w-[365px] h-[22px] bg-[#e3e4e4] border border-b-0 border-[#c4c4c4] flex items-stretch text-[12px] text-[#444] font-['Liberation_Sans',sans-serif] tracking-normal pl-px">
              <div className="w-[66px] bg-[#9fcbe1] flex items-center justify-center">Lifecycle</div>
              <span className="self-center ml-[11px] w-[90px]">Collaboration</span>
              <span className="self-center w-[86px]">Simulation</span>
              <span className="self-center w-[64px]">View</span>
              <span className="self-center">Tools</span>
            </div>
            <div className="ml-[3px]"><V w={20} h={14} vb="0 0 20 14" c={<path d="M1 4 L4 1 L10 7 L16 1 L19 4 L10 13Z" fill="#fff" stroke="#cfcfcf" strokeWidth="1.2" />} /></div>
          </div>
          <div className="ml-[9px] w-[410px] h-[50px] bg-[#e3e4e4] border border-b-0 border-[#c4c4c4] flex items-center shrink-0 pl-[1px]">
            <div className="w-[53px] h-full bg-white border-r border-[#9a9a9a] flex items-center pl-[6px]">
              <Gy c={<>
                <Db x={0} y={3} f="#bdbdbd" k="#333" /><Db x={4} y={5} f="#cdcdcd" k="#333" /><Db x={8} y={7} f="#dedede" k="#333" />
                <path d="M22 14 L29 21 H26 V28 H18 V21 H15Z" fill={BL} stroke={BD} />
              </>} />
              <div className="ml-[2px]"><Caret c="#111" /></div>
            </div>
            <div className="ml-[7px]"><Gy c={<><Db x={4} y={3} /><circle cx="22" cy="21" r="4.5" fill="none" stroke="#a8a8a8" strokeWidth="2.2" strokeDasharray="9 3" /></>} /></div>
            <div className="ml-[13px]"><Gy c={<>
              <circle cx="14" cy="14" r="7" fill="#e8e8e8" stroke="#8a8a8a" strokeWidth="2.4" />
              <path d="M19 19 L27 27" stroke="#7a7a7a" strokeWidth="3" />
              <path d="M1 14 H7 M15 7 L21 3 M21 3 H28 M25 0 L29 3 L25 7" fill="none" stroke="#9a9a9a" strokeWidth="2" />
            </>} /></div>
            <div className="ml-[2px]"><Caret c="#111" /></div>
            <div className="ml-[13px]"><Gy c={<>
              <path d="M6 10 C9 2 21 2 24 10 M24 20 C21 28 9 28 6 20" fill="none" stroke="#aaa" strokeWidth="1.8" />
              <path d="M2 12 h7 l3 3 -3 3 h-7 l3 -3Z M11 12 h7 l3 3 -3 3 h-7 l3 -3Z M20 12 h5 l3 3 -3 3 h-5 l3 -3Z" fill="#a8a8a8" />
            </>} /></div>
            <div className="ml-[12px]"><Gy c={<>
              <Node x={5} y={5} /><Node x={5} y={25} />
              <path d="M5 8 V22 M5 18 H10 C12 18 13 16 13 14 V8 C13 6 11 5 8 5" fill="none" stroke="#7a7a7a" strokeWidth="2" />
              <path d="M13 5 H28 M17 12 H28 M17 19 H28 M13 25 H28" stroke="#a2a2a2" strokeWidth="3" />
            </>} /></div>
            <div className="ml-[12px]"><Gy c={<>
              <Node x={5} y={5} /><Node x={5} y={24} /><path d="M5 8 V21" stroke="#7a7a7a" strokeWidth="2" /><Plus x={14} y={16} />
            </>} /></div>
            <div className="ml-[13px]"><Gy c={<>
              <Node x={5} y={5} /><Node x={5} y={25} /><Node x={21} y={25} />
              <path d="M5 8 V22 M5 15 H17 C19 15 21 17 21 22" fill="none" stroke="#7a7a7a" strokeWidth="2" /><Plus x={16} y={1} />
            </>} /></div>
            <div className="ml-[11px]"><Gy c={<>
              <Node x={5} y={5} /><Node x={5} y={25} /><Node x={23} y={5} />
              <path d="M5 8 V22 M5 15 H17 C20 15 23 13 23 8" fill="none" stroke="#7a7a7a" strokeWidth="2" /><Plus x={16} y={17} />
            </>} /></div>
            <div className="ml-[14px]"><Gy c={<>
              <Db x={3} y={2} />
              <circle cx="22" cy="21" r="7" fill="#f2f2f2" stroke="#777" strokeWidth="1.6" />
              <path d="M22 17 V21 H25" fill="none" stroke="#555" strokeWidth="1.4" />
            </>} /></div>
          </div>
        </div>
      </div>
    </div>

    {/* status bar */}
    <div className="h-[20px] bg-[#f5f5f5] border-b-2 border-[#2a2a2a] flex items-center shrink-0 text-[11.7px] text-[#222] whitespace-nowrap leading-none">
      <span className="ml-[1px] text-[11.4px]">SOLIDWORKS Premium 2025 SP3.0</span>
      <div className="ml-auto w-[416px] flex items-center">
        <span className="w-[103px]">Process complete</span>
        <span className="w-[83px]">Editing Part</span>
        <div className="w-px h-[16px] bg-[#c8c8c8]" />
        <div className="ml-[7px] w-[96px]"><V w={16} h={16} vb="0 0 16 16" c={<><path d="M6 1 L11 10 H1Z" fill="#f2b705" stroke="#333" strokeWidth=".6" /><path d="M11 5 L14 1" stroke="#111" strokeWidth="2" /><path d="M1 13 h4 M7 13 h3 M12 13 h3" stroke={BL} strokeWidth="2.5" /></>} /></div>
        <span className="w-[57px]">MMGS</span>
        <Caret up c="#444" />
        <div className="ml-[21px]"><V w={18} h={16} vb="0 0 18 16" c={<path d="M1 6 L8 1 L17 8 V11 L9 15 L1 9Z M1 6 L9 12 L17 8 M9 12 V15" fill="#f4f4f4" stroke="#333" strokeWidth=".9" />} /></div>
        <div className="ml-[19px] grid grid-cols-3 gap-px opacity-50">
          {[0, 1, 2, 3, 4, 5].map(i => <div key={i} className={`w-[2px] h-[2px] ${i === 0 || i === 1 ? "" : "bg-[#888]"}`} />)}
        </div>
      </div>
    </div>
  </div>
);

function HudIcons() {
  const C = () => <div className="w-[12px] flex justify-center"><Caret c="#9a9a9a" /></div>;
  const W = ({ c, cls = "" }: { c: React.ReactNode; cls?: string }) => <div className={`w-[26px] flex justify-center ${cls}`}><V s={20} c={c} /></div>;
  const Mag = <><circle cx="12" cy="7.5" r="6" fill="#f2f2f2" stroke="#888" strokeWidth="1.2" /><path d="M8 12 L2 18" stroke={BL} strokeWidth="2.6" /></>;
  return (
    <>
      <W c={<>{Mag}<circle cx="12" cy="7.5" r="2" fill="none" stroke="#666" /></>} />
      <W c={<>{Mag}<rect x="7" y="1" width="11" height="11" fill="none" stroke="#555" strokeWidth=".8" strokeDasharray="2 1.5" /></>} />
      <W c={<><path d="M3 10 L13 2 L18 7 L10 15 C6 17 2 14 3 10Z" fill="#e2e2e2" stroke="#777" /><path d="M18 13 H9 M12 10 L8 13 L12 16" fill="none" stroke={BL} strokeWidth="1.8" /></>} />
      <W c={<><path d="M2 7 C3 1 15 1 17 5 V14 L10 18 H2Z" fill="#9cc6e0" stroke="#5a6a74" /><path d="M7 7 C8 4 12 4 12 7 V18 H7Z" fill="#e8e8e8" stroke="#5a6a74" /></>} />
      <W c={<><path d="M2 5 L6 1 H18 V15 L14 19 H2Z" fill="#a6d0e8" stroke={BD} /><path d="M2 5 H14 V19 M14 5 L18 1" fill="none" stroke="#333" /><path d="M8 1 V5 M11 0 V5" stroke="#333" /></>} />
      <C />
      <div className="ml-[2px]"><W c={<><path d="M4 3 L12 1 L16 4 V18 L8 19 L4 17Z" fill="#a6d0e8" stroke="#7a8a94" /><path d="M4 3 L8 5 L16 4 M8 5 V19" fill="none" stroke="#7a8a94" /></>} /></div>
      <C />
      <div className="ml-[2px]"><W c={<><path d="M1 10 C4 3 16 3 19 10 C16 17 4 17 1 10Z" fill="#ebebeb" stroke="#c6c6c6" /><ellipse cx="10" cy="10" rx="3" ry="6" fill="#8c8c8c" /><path d="M10 1 V19" stroke="#555" strokeWidth=".7" /></>} /></div>
      <C />
      <div className="ml-[1px]"><W c={<><path d="M10 1 C15 1 18 5 18 9 C18 12 15 15 10 18 C5 15 2 12 2 9 C2 5 5 1 10 1Z" fill="#e8a830" /><path d="M10 1 C6 1 2 5 2 9 L10 9Z" fill="#d33a2c" /><path d="M2 9 C2 12 5 15 10 18 V9Z" fill="#5aa83c" /><path d="M10 1 V9 H18 C18 5 15 1 10 1Z" fill={BL} /><path d="M9 19 L14 11" stroke="#333" strokeWidth="1.8" /></>} /></div>
      <W c={<><path d="M10 1 C14 1 17 4 17 8 V11 H3 V8 C3 4 6 1 10 1Z" fill="#e8a830" /><path d="M10 1 C6 1 3 4 3 8 H10Z" fill="#d33a2c" /><path d="M10 1 V8 H17 C17 4 14 1 10 1Z" fill={BL} /><rect x="3" y="8" width="14" height="4" fill="#5aa83c" /><rect x="2" y="12" width="16" height="7" fill="#444" /><path d="M5 12 V19 M10 12 V19 M15 12 V19" stroke="#eee" /></>} />
      <div className="ml-[2px]"><C /></div>
      <div className="ml-[2px]"><W c={<><rect x="2" y="2" width="16" height="12" fill="#dedede" stroke="#888" /><path d="M10 14 V17 M6 18 H14" stroke="#666" strokeWidth="1.8" /></>} /></div>
      <C />
    </>
  );
}

export default App;
